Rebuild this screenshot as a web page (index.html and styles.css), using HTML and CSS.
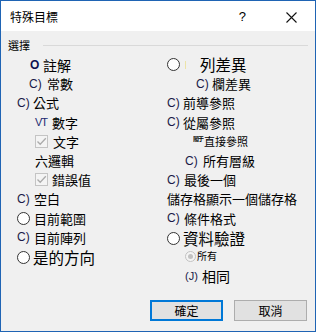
FILE: index.html
```html
<!DOCTYPE html>
<html lang="zh-Hant">
<head>
<meta charset="utf-8">
<title>特殊目標</title>
<link rel="stylesheet" href="styles.css">
</head>
<body>
<div class="dialog">
  <div class="titlebar">
    <span class="title">特殊目標</span>
    <span class="help">?</span>
    <svg class="close" width="11" height="11" viewBox="0 0 11 11"><path d="M0.5 0.5 L10.5 10.5 M10.5 0.5 L0.5 10.5" stroke="#111" stroke-width="1.1" fill="none"/></svg>
  </div>
  <div class="body">
    <div class="group-head"><span class="group-label">選擇</span><span class="group-line"></span></div>
    <div class="cols">
      <div class="col">
        <div class="row i29 f14"><span class="mk w13 o">O</span>註解</div>
        <div class="row i28"><span class="mk w18">C)</span>常數</div>
        <div class="row i16"><span class="mk w16">C)</span>公式</div>
        <div class="row i34"><span class="mk w17 vt">VT</span>數字</div>
        <div class="row i34"><span class="cb"><svg width="11" height="11" viewBox="0 0 11 11"><path d="M1.5 5.5 L4.2 8.3 L9.8 2.2" stroke="#ababab" stroke-width="1.3" fill="none"/></svg></span><span class="gap5"></span>文字</div>
        <div class="row i34">六邏輯</div>
        <div class="row i34"><span class="cb"><svg width="11" height="11" viewBox="0 0 11 11"><path d="M1.5 5.5 L4.2 8.3 L9.8 2.2" stroke="#ababab" stroke-width="1.3" fill="none"/></svg></span><span class="gap4"></span>錯誤值</div>
        <div class="row i16"><span class="mk w17">C)</span>空白</div>
        <div class="row i16"><span class="radio"></span><span class="gap4"></span>目前範圍</div>
        <div class="row i16"><span class="mk w17">C)</span>目前陣列</div>
        <div class="row i16 f16 low"><span class="radio"></span><span class="gap3"></span>是的方向</div>
      </div>
      <div class="col">
        <div class="row i0 f16"><span class="radio"></span><span class="tick"></span>列差異</div>
        <div class="row i29"><span class="mk w16">C)</span>欄差異</div>
        <div class="row i0"><span class="mk w16">C)</span>前導參照</div>
        <div class="row i0"><span class="mk w16">C)</span>從屬參照</div>
        <div class="row i26 f11"><span class="tiny">鬮于</span>直接參照</div>
        <div class="row i18"><span class="mk w18">C)</span>所有層級</div>
        <div class="row i0"><span class="mk w17">C)</span>最後一個</div>
        <div class="row i0">儲存格顯示一個儲存格</div>
        <div class="row i0"><span class="mk w17">C)</span>條件格式</div>
        <div class="row i0 f16 low"><span class="radio"></span><span class="gap3"></span>資料驗證</div>
        <div class="row i18 f10 up"><span class="radio-dis"><span class="dot"></span></span><span class="gap1"></span>所有</div>
        <div class="row i18 f14"><span class="mk w17 j">(J)</span>相同</div>
      </div>
    </div>
    <div class="buttons">
      <button class="btn default">確定</button>
      <button class="btn">取消</button>
    </div>
  </div>
</div>
</body>
</html>
```
FILE: styles.css
```css
html, body {
  margin: 0;
  padding: 0;
  background: #f0f0f0;
}
body {
  font-family: "Noto Sans CJK TC", "Noto Sans", sans-serif;
  color: #000;
}
.dialog {
  width: 316px;
  height: 332px;
  box-sizing: border-box;
  border: 1px solid #1f64b4;
  display: flex;
  flex-direction: column;
  background: #f0f0f0;
}
.titlebar {
  height: 30px;
  background: #fff;
  display: flex;
  align-items: center;
  flex: none;
}
.title {
  font-size: 12px;
  line-height: 14px;
  margin-left: 9px;
  margin-top: 2px;
  flex: 1;
}
.help {
  font-family: "Liberation Sans", sans-serif;
  font-size: 13px;
  line-height: 14px;
  margin-top: 2px;
  margin-right: 40px;
}
.close {
  margin-right: 18px;
  margin-top: 2px;
}
.body {
  flex: 1;
  display: flex;
  flex-direction: column;
  padding-bottom: 10px;
}
.group-head {
  display: flex;
  align-items: center;
  height: 15px;
  margin-top: 7px;
  padding-left: 7px;
  padding-right: 7px;
}
.group-label {
  font-size: 11px;
  line-height: 15px;
}
.group-line {
  flex: 1;
  height: 1px;
  background: #d9d9d9;
  margin-left: 13px;
  margin-top: -1px;
}
.cols {
  display: grid;
  grid-template-columns: 166px 1fr;
  margin-top: 2px;
}
.col {
  display: flex;
  flex-direction: column;
}
.row {
  height: 19.2px;
  display: flex;
  align-items: center;
  font-size: 13px;
  line-height: 15px;
  white-space: nowrap;
}
.row.low { margin-top: 1.2px; }
.row.up { margin-top: -1.2px; }
.f10 { font-size: 10px; line-height: 12px; }
.f11 { font-size: 11px; line-height: 13px; }
.f14 { font-size: 14px; line-height: 16px; }
.f16 { font-size: 15.5px; line-height: 17px; }
.i0 { margin-left: 0; }
.i16 { margin-left: 16px; }
.i18 { margin-left: 18px; }
.i26 { margin-left: 26px; }
.i28 { margin-left: 28px; }
.i29 { margin-left: 29px; }
.i34 { margin-left: 34px; }
.mk {
  font-family: "Liberation Sans", sans-serif;
  font-size: 12px;
  line-height: 14px;
  display: inline-block;
  flex: none;
  color: #1a1a48;
}
.mk.o {
  font-size: 12px;
  font-weight: bold;
  color: #101050;
}
.w13 { width: 13px; }
.w16 { width: 16px; }
.w17 { width: 17px; }
.w18 { width: 18px; }
.vt {
  font-size: 11px;
  letter-spacing: -1px;
  color: #1c2a70;
}
.j { font-size: 11px; }
.gap1 { width: 1px; flex: none; }
.gap3 { width: 3px; flex: none; }
.gap4 { width: 4px; flex: none; }
.gap5 { width: 5px; flex: none; }
.cb {
  width: 13px;
  height: 13px;
  box-sizing: border-box;
  border: 1px solid #c4c4c4;
  background: #f4f4f4;
  display: flex;
  align-items: center;
  justify-content: center;
  flex: none;
}
.cb svg { display: block; }
.radio {
  width: 13px;
  height: 13px;
  box-sizing: border-box;
  border: 1px solid #333;
  border-radius: 50%;
  background: #fff;
  flex: none;
}
.radio-dis {
  width: 11px;
  height: 11px;
  box-sizing: border-box;
  border: 1px solid #c2c2c2;
  border-radius: 50%;
  background: #f4f4f4;
  display: flex;
  align-items: center;
  justify-content: center;
  flex: none;
}
.dot {
  width: 5px;
  height: 5px;
  border-radius: 50%;
  background: #c2c2c2;
}
.tick {
  width: 15px;
  height: 8px;
  flex: none;
  box-sizing: border-box;
  border-left: 1px solid #ece3a8;
  margin-left: 5px;
}
.tiny {
  font-size: 6px;
  font-weight: bold;
  width: 11px;
  flex: none;
  line-height: 7px;
  margin-top: -5px;
  letter-spacing: -1px;
  overflow: hidden;
}
.buttons {
  margin-top: auto;
  display: flex;
  justify-content: flex-end;
  gap: 11px;
  padding-right: 8px;
}
.btn {
  width: 73px;
  height: 21px;
  box-sizing: border-box;
  background: #e1e1e1;
  border: 1px solid #adadad;
  font-family: "Noto Sans CJK TC", sans-serif;
  font-size: 12px;
  line-height: 17px;
  padding: 0;
  color: #000;
}
.btn.default {
  border: 2px solid #0078d7;
}
```
